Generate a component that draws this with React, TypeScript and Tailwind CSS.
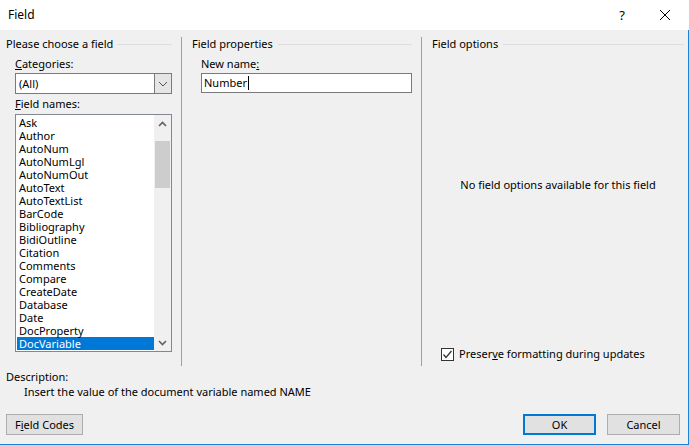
const fieldNames = [
  "Ask",
  "Author",
  "AutoNum",
  "AutoNumLgl",
  "AutoNumOut",
  "AutoText",
  "AutoTextList",
  "BarCode",
  "Bibliography",
  "BidiOutline",
  "Citation",
  "Comments",
  "Compare",
  "CreateDate",
  "Database",
  "Date",
  "DocProperty",
  "DocVariable",
];

function GroupHeader({ title }: { title: string }) {
  return (
    <div className="flex h-[14px] items-center gap-[5px] leading-[14px]">
      <span className="whitespace-nowrap">{title}</span>
      <div className="h-px flex-1 bg-[#dcdcdc]" />
    </div>
  );
}

function Chevron({ up }: { up?: boolean }) {
  return (
    <svg width="9" height="6" viewBox="0 0 9 6" className="block">
      <polyline
        points={up ? "1,5 4.5,1.5 8,5" : "1,1 4.5,4.5 8,1"}
        fill="none"
        stroke="#606060"
        strokeWidth="1.6"
      />
    </svg>
  );
}

function Button({ children, primary }: { children: React.ReactNode; primary?: boolean }) {
  return (
    <div
      className={`flex h-[21px] items-center justify-center bg-[#e1e1e1] ${
        primary ? "border-2 border-[#0078d7]" : "border border-[#adadad]"
      }`}
    >
      {children}
    </div>
  );
}

export default function App() {
  return (
    <div
      className="flex h-[445px] w-[689px] flex-col text-[11px] leading-[14px] text-black"
      style={{ fontFamily: '"Segoe UI", "Noto Sans", sans-serif' }}
    >
      {/* title bar */}
      <div className="flex h-[30px] items-center bg-white pl-[8px]">
        <span className="flex-1 text-[12px]">Field</span>
        <span className="w-[16px] text-center text-[13px]">?</span>
        <div className="ml-[29px] mr-[18px] flex w-[12px] items-center justify-center">
          <svg width="12" height="12" viewBox="0 0 12 12">
            <path d="M1 1 L11 11 M11 1 L1 11" stroke="#000" strokeWidth="1" />
          </svg>
        </div>
      </div>

      {/* body */}
      <div className="flex flex-1 flex-col border-r border-b border-[#1883d7] bg-[#f0f0f0]">
        <div className="mt-[7px] flex h-[329px]">
          {/* left group */}
          <div className="w-[181px] pl-[6px]">
            <div className="w-[166px]">
              <GroupHeader title="Please choose a field" />
            </div>
            <div className="ml-[9px] mt-[6px]">
              <span className="underline">C</span>ategories:
            </div>
            <div className="ml-[9px] mt-[2px] flex h-[21px] w-[157px] border border-[#7a7a7a] bg-white">
              <div className="flex flex-1 items-center pl-[3px]">(All)</div>
              <div className="flex w-[17px] items-center justify-center border-l border-[#7a7a7a] bg-[#e5e5e5]">
                <svg width="10" height="6" viewBox="0 0 10 6">
                  <polyline points="1,1 5,5 9,1" fill="none" stroke="#555" strokeWidth="1" />
                </svg>
              </div>
            </div>
            <div className="ml-[9px] mt-[3px]">
              <span className="underline">F</span>ield names:
            </div>
            <div className="ml-[9px] mt-[3px] flex h-[238px] w-[157px] border border-[#828790] bg-white">
              <div className="flex-1 pl-[1px] pt-[1px]">
                {fieldNames.map((name) => (
                  <div
                    key={name}
                    className={`h-[13px] pl-[2px] leading-[13px] ${
                      name === "DocVariable" ? "bg-[#0078d7] text-white" : ""
                    }`}
                  >
                    {name}
                  </div>
                ))}
              </div>
              <div className="flex w-[17px] flex-col bg-[#f0f0f0]">
                <div className="flex h-[17px] items-center justify-center">
                  <Chevron up />
                </div>
                <div className="ml-px mt-[9px] h-[47px] w-[15px] bg-[#cdcdcd]" />
                <div className="flex-1" />
                <div className="flex h-[17px] items-center justify-center">
                  <Chevron />
                </div>
              </div>
            </div>
          </div>

          <div className="w-px bg-[#a0a0a0]" />

          {/* middle group */}
          <div className="w-[239px] pl-[10px]">
            <div className="w-[220px]">
              <GroupHeader title="Field properties" />
            </div>
            <div className="ml-[9px] mt-[6px]">
              New name<span className="underline">:</span>
            </div>
            <div className="ml-[9px] mt-[2px] flex h-[20px] w-[211px] items-center border border-[#7a7a7a] bg-white pl-[2px]">
              Number
              <span className="ml-px inline-block h-[14px] w-px bg-black" />
            </div>
          </div>

          <div className="w-px bg-[#a0a0a0]" />

          {/* right group */}
          <div className="flex-1 pl-[10px] pr-[4px]">
            <GroupHeader title="Field options" />
            <div className="mt-[127px] text-center">No field options available for this field</div>
            <div className="ml-[9px] mt-[155px] flex items-center gap-[5px]">
              <div className="flex h-[13px] w-[13px] items-center justify-center border border-[#333] bg-white">
                <svg width="11" height="11" viewBox="0 0 11 11">
                  <polyline points="1.5,5.5 4,8.5 9.5,2" fill="none" stroke="#333" strokeWidth="1.3" />
                </svg>
              </div>
              <span>
                Preser<span className="underline">v</span>e formatting during updates
              </span>
            </div>
          </div>
        </div>

        {/* description */}
        <div className="ml-[6px] mt-[4px]">Description:</div>
        <div className="ml-[24px] mt-[1px]">Insert the value of the document variable named NAME</div>

        {/* buttons */}
        <div className="mt-[15px] flex pl-[6px] pr-[8px]">
          <div className="w-[77px]">
            <Button>
              F<span className="underline">i</span>eld Codes
            </Button>
          </div>
          <div className="flex-1" />
          <div className="w-[73px]">
            <Button primary>OK</Button>
          </div>
          <div className="ml-[11px] w-[73px]">
            <Button>Cancel</Button>
          </div>
        </div>
      </div>
    </div>
  );
}
